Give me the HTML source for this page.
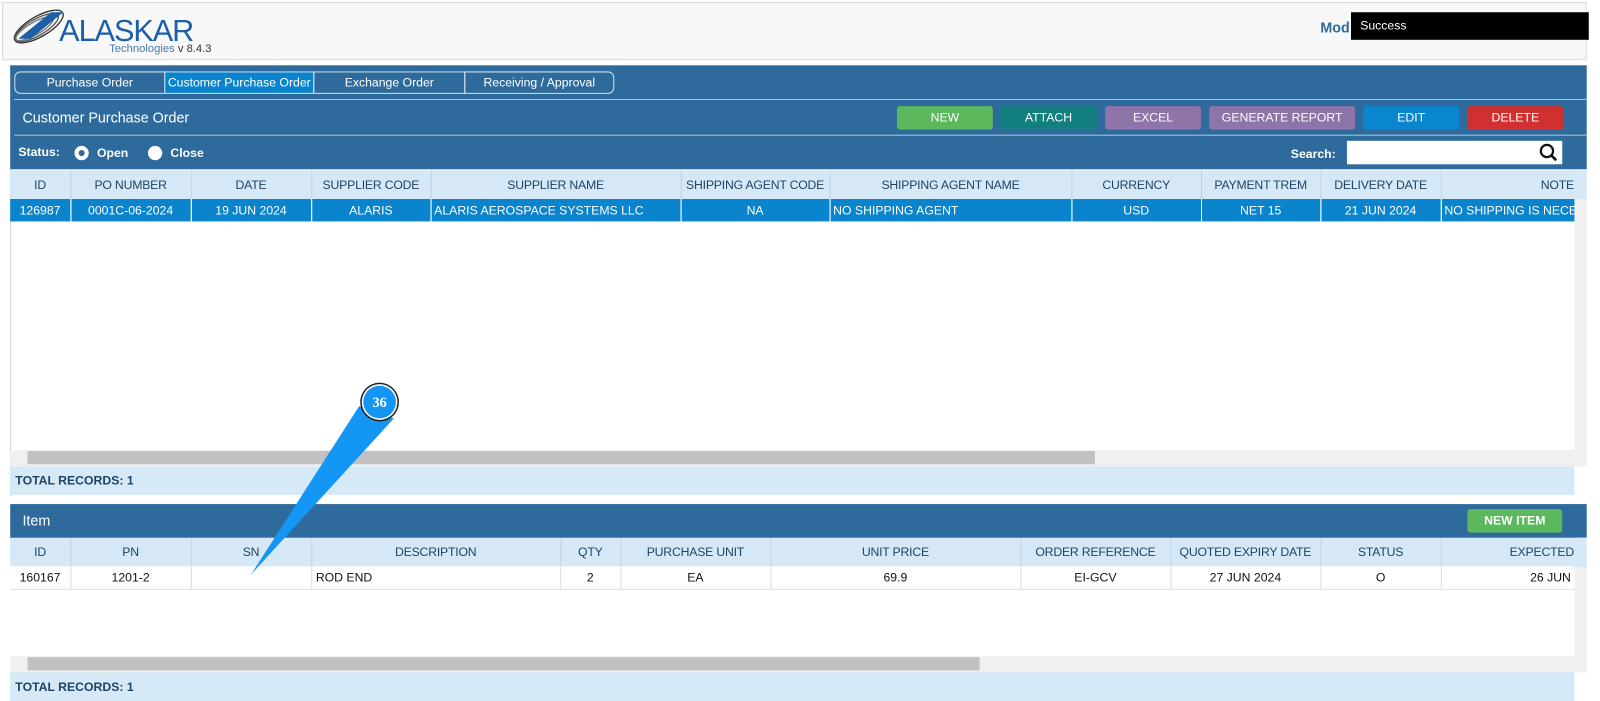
<!DOCTYPE html>
<html><head><meta charset="utf-8"><style>
*{box-sizing:border-box;margin:0;padding:0}
body{width:1600px;height:701px;background:#fff;font-family:"Liberation Sans",Arial,sans-serif;font-size:12px;overflow:hidden}
#w{position:relative;width:1568px;height:687px;transform:scale(1.0204);transform-origin:0 0}
.abs{position:absolute}
.hdr{left:2px;top:2px;width:1553px;height:57px;background:#f8f8f8;border:1px solid #ddd}
.blue{background:#2e6b9c}
.tab{position:absolute;top:70px;height:22px;border:1px solid #cfe0ee;color:#fff;font-size:12px;text-align:center;line-height:20px}
.btn{position:absolute;top:104px;height:23px;border-radius:3px;color:#fff;text-align:center;line-height:23px;font-size:12px}
table{border-collapse:collapse;position:absolute;table-layout:fixed}
td{border-right:1px solid #b8d0e4;text-align:center;white-space:nowrap;overflow:hidden;font-size:12px}
.th td{background:#d6e8f6;color:#1d4466;height:28px;letter-spacing:-0.2px}
.sel td{background:#0a84cd;color:#fff;height:22px;border-right:1px solid #fff}
.row td{background:#fff;color:#111;height:22px;border-right:1px solid #ddd;border-bottom:1px solid #ddd}
.tot{background:#d6e9f7;color:#1d4466;font-weight:bold;font-size:12px;padding-left:5px}
.sb{background:#f0f0f0}
</style></head><body><div id="w">
<div class="abs hdr"></div>
<svg class="abs" style="left:10px;top:8px" width="60" height="36" viewBox="0 0 60 36">
<g fill="none" stroke="#333" stroke-width="1.3">
<ellipse cx="28" cy="18" rx="27" ry="10" transform="rotate(-30 28 18)"/>
<ellipse cx="26" cy="19" rx="24" ry="8" transform="rotate(-30 26 19)" stroke="#555"/>
<ellipse cx="24" cy="20" rx="21" ry="6" transform="rotate(-30 24 20)" stroke="#777"/>
</g>
<path d="M8 30 L40 4 L52 4 L20 30Z" fill="#1a5fa8"/></svg>
<div class="abs" style="left:58px;top:14px;font-size:30px;color:#1a5fa8;letter-spacing:-1px">ALASKAR</div>
<div class="abs" style="left:107px;top:42px;font-size:11px;color:#4a79b0">Technologies <span style="color:#333">v 8.4.3</span></div>
<div class="abs" style="left:1294px;top:19px;font-size:14px;color:#2e6b9c;font-weight:bold">Mod</div>
<div class="abs" style="left:1324px;top:12px;width:233px;height:27px;background:#000;color:#fff;font-size:12px;line-height:27px;padding-left:9px">Success</div>

<div class="abs blue" style="left:10px;top:64px;width:1545px;height:102px"></div>
<div class="abs" style="left:14px;top:97px;width:1541px;height:1px;background:#a9c6dd"></div>
<div class="abs" style="left:14px;top:132px;width:1541px;height:1px;background:#a9c6dd"></div>
<div class="tab" style="left:14px;width:148px;border-radius:6px 0 0 6px">Purchase Order</div>
<div class="tab" style="left:161px;width:147px;background:#0a84cd">Customer Purchase Order</div>
<div class="tab" style="left:307px;width:149px">Exchange Order</div>
<div class="tab" style="left:455px;width:147px;border-radius:0 6px 6px 0">Receiving / Approval</div>
<div class="abs" style="left:22px;top:107px;color:#fff;font-size:14px">Customer Purchase Order</div>
<div class="btn" style="left:879px;width:94px;background:#5cb85c">NEW</div>
<div class="btn" style="left:980px;width:95px;background:#137f7f">ATTACH</div>
<div class="btn" style="left:1083px;width:94px;background:#8e74a9">EXCEL</div>
<div class="btn" style="left:1185px;width:143px;background:#8e74a9">GENERATE REPORT</div>
<div class="btn" style="left:1336px;width:94px;background:#0a86cf">EDIT</div>
<div class="btn" style="left:1438px;width:94px;background:#d13030">DELETE</div>
<div class="abs" style="left:18px;top:142px;color:#fff;font-weight:bold">Status:</div>
<div class="abs" style="left:73px;top:143px;width:14px;height:14px;border-radius:50%;background:#fff"><div style="margin:4px;width:6px;height:6px;border-radius:50%;background:#2e6b9c"></div></div>
<div class="abs" style="left:95px;top:143px;color:#fff;font-weight:bold">Open</div>
<div class="abs" style="left:145px;top:143px;width:14px;height:14px;border-radius:50%;background:#fff"></div>
<div class="abs" style="left:167px;top:143px;color:#fff;font-weight:bold">Close</div>
<div class="abs" style="left:1265px;top:144px;color:#fff;font-weight:bold">Search:</div>
<div class="abs" style="left:1320px;top:138px;width:211px;height:23px;background:#fff"></div>
<svg class="abs" style="left:1508px;top:140px" width="20" height="20"><circle cx="8" cy="8" r="6" fill="none" stroke="#111" stroke-width="2.2"/><path d="M12.5 12.5 L17 17" stroke="#111" stroke-width="2.6"/></svg>

<div class="abs" style="left:10px;top:166px;width:1545px;height:320px;background:#fff;border-left:1px solid #ccc"></div>
<table style="left:10px;top:167px;width:1533px">
<colgroup><col style="width:59px"><col style="width:118px"><col style="width:118px"><col style="width:117px"><col style="width:245px"><col style="width:146px"><col style="width:237px"><col style="width:127px"><col style="width:117px"><col style="width:118px"><col style="width:131px"></colgroup>
<tr class="th"><td>ID</td><td>PO NUMBER</td><td>DATE</td><td>SUPPLIER CODE</td><td>SUPPLIER NAME</td><td>SHIPPING AGENT CODE</td><td>SHIPPING AGENT NAME</td><td>CURRENCY</td><td>PAYMENT TREM</td><td>DELIVERY DATE</td><td style="text-align:right">NOTE</td></tr>
<tr class="sel"><td>126987</td><td>0001C-06-2024</td><td>19 JUN 2024</td><td>ALARIS</td><td style="text-align:left;padding-left:3px">ALARIS AEROSPACE SYSTEMS LLC</td><td>NA</td><td style="text-align:left;padding-left:3px">NO SHIPPING AGENT</td><td>USD</td><td>NET 15</td><td>21 JUN 2024</td><td style="text-align:left;padding-left:3px">NO SHIPPING IS NECESSARY</td></tr>
</table>
<div class="abs sb" style="left:1543px;top:167px;width:12px;height:290px"></div>
<div class="abs" style="left:1543px;top:167px;width:12px;height:28px;background:#d6e8f6"></div>
<div class="abs sb" style="left:10px;top:441px;width:1545px;height:16px"></div>
<div class="abs" style="left:27px;top:442px;width:1046px;height:13px;background:#c1c1c1"></div>
<div class="abs tot" style="left:10px;top:457px;width:1533px;height:28px;line-height:28px">TOTAL RECORDS: 1</div>

<div class="abs blue" style="left:10px;top:494px;width:1545px;height:33px"></div>
<div class="abs" style="left:22px;top:502px;color:#fff;font-size:14px">Item</div>
<div class="btn" style="left:1438px;top:499px;width:93px;background:#5cb85c;font-weight:bold">NEW ITEM</div>
<table style="left:10px;top:527px;width:1533px">
<colgroup><col style="width:59px"><col style="width:118px"><col style="width:118px"><col style="width:244px"><col style="width:59px"><col style="width:147px"><col style="width:245px"><col style="width:147px"><col style="width:147px"><col style="width:118px"><col style="width:131px"></colgroup>
<tr class="th"><td>ID</td><td>PN</td><td>SN</td><td>DESCRIPTION</td><td>QTY</td><td>PURCHASE UNIT</td><td>UNIT PRICE</td><td>ORDER REFERENCE</td><td>QUOTED EXPIRY DATE</td><td>STATUS</td><td style="text-align:right">EXPECTED</td></tr>
<tr class="row"><td>160167</td><td>1201-2</td><td></td><td style="text-align:left;padding-left:4px">ROD END</td><td>2</td><td>EA</td><td>69.9</td><td>EI-GCV</td><td>27 JUN 2024</td><td>O</td><td style="text-align:right;padding-right:3px">26 JUN</td></tr>
</table>
<div class="abs sb" style="left:1543px;top:527px;width:12px;height:132px"></div>
<div class="abs" style="left:1543px;top:527px;width:12px;height:29px;background:#d6e8f6"></div>
<div class="abs sb" style="left:10px;top:643px;width:1545px;height:16px"></div>
<div class="abs" style="left:27px;top:644px;width:933px;height:13px;background:#c1c1c1"></div>
<div class="abs tot" style="left:10px;top:659px;width:1533px;height:28px;line-height:28px">TOTAL RECORDS: 1</div>

<svg class="abs" style="left:0;top:0" width="1568" height="687">
<path d="M352 398 L386 410 L246 563Z" fill="#1496f5"/>
<circle cx="372" cy="394" r="19" fill="#222"/>
<circle cx="372" cy="394" r="17.5" fill="#fff"/>
<circle cx="372" cy="394" r="16" fill="#1496f5"/>
<text x="372" y="399" text-anchor="middle" fill="#fff" font-family="Liberation Serif" font-weight="bold" font-size="14">36</text>
</svg>
</div></body></html>
